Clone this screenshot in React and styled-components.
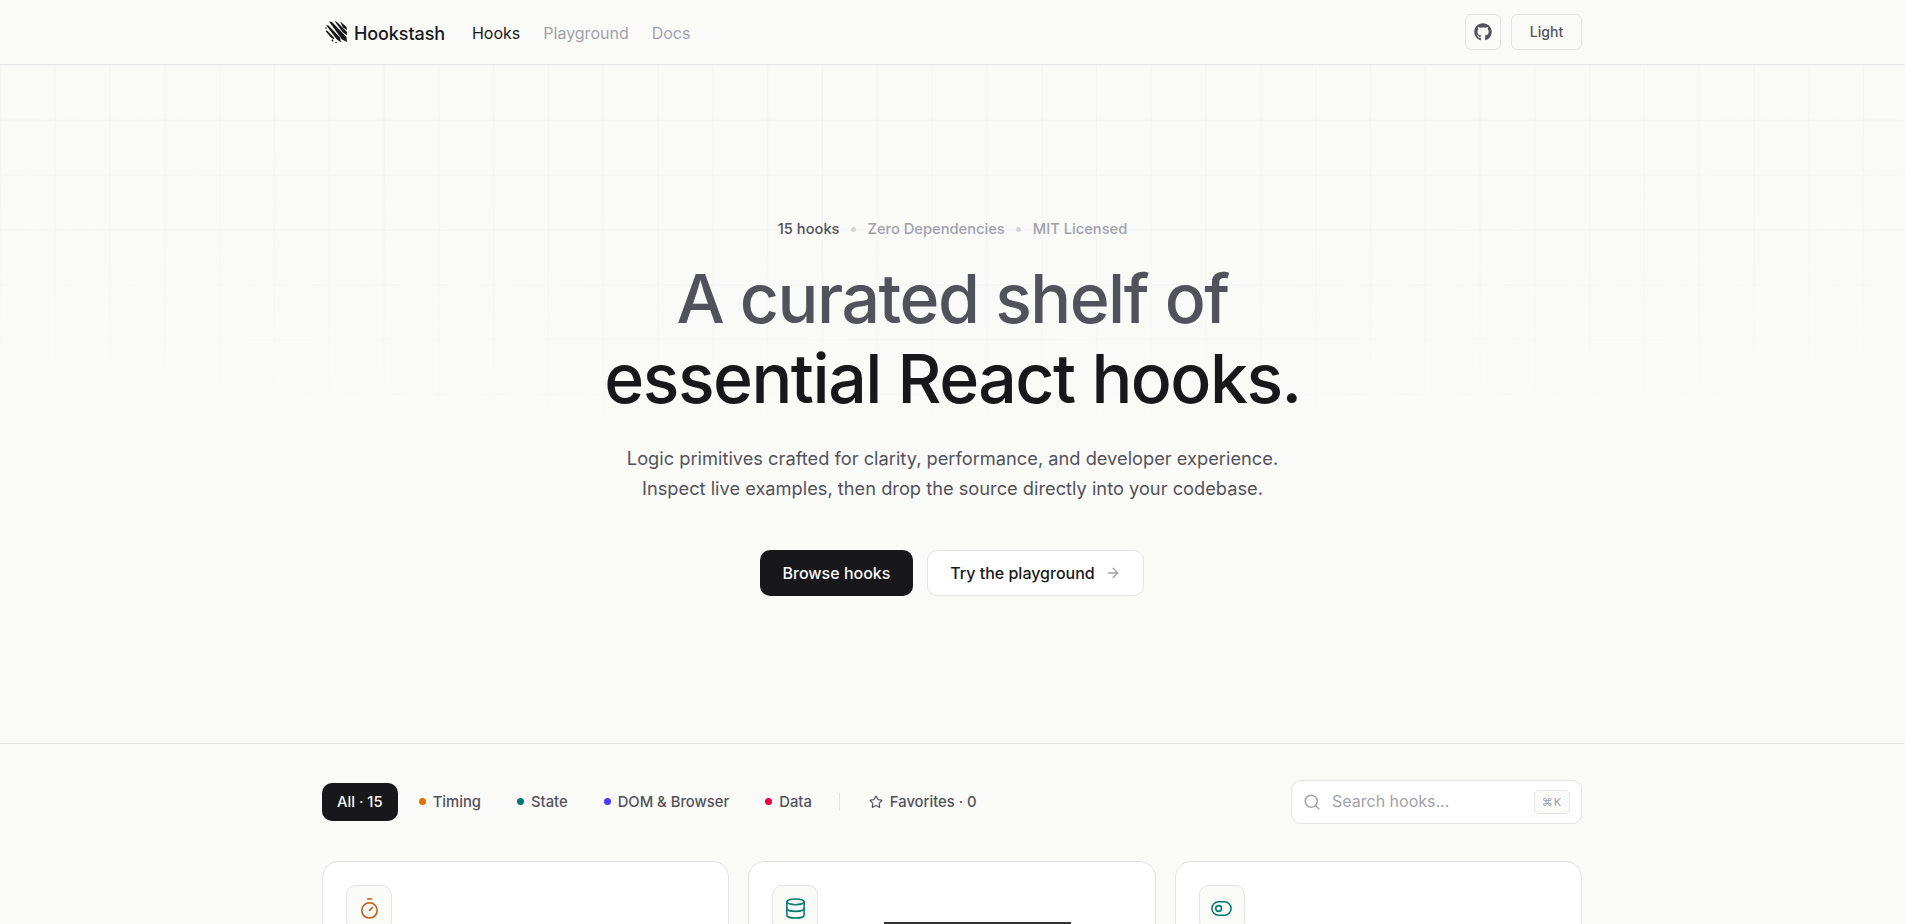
import React from "react";
import styled, { createGlobalStyle } from "styled-components";
import { ArrowRight, Search, Star, Timer, Database, ToggleLeft } from "lucide-react";
import { FaGithub } from "react-icons/fa";

const Global = createGlobalStyle`
  html, body { margin: 0; padding: 0; background: #fafaf9; }
  body { font-family: Inter, "Liberation Sans", sans-serif; color: #18181b; overflow: hidden; height: 924px; }
  * { box-sizing: border-box; }
`;

const Nav = styled.header`
  height: 65px;
  border-bottom: 1px solid #e4e4e7;
  display: flex;
`;
const Container = styled.div`
  width: 1260px;
  margin-left: 322px;
  display: flex;
  align-items: center;
`;
const Brand = styled.div`
  display: flex;
  align-items: center;
  gap: 7px;
  font-size: 18px;
  font-weight: 500;
  letter-spacing: -0.1px;
`;
const BrandName = styled.span`
  padding-top: 2px;
`;
const NavLinks = styled.nav`
  display: flex;
  gap: 23px;
  margin-left: 27px;
  padding-top: 2px;
`;
const NavLink = styled.a`
  font-size: 16px;
  color: ${(p) => (p.$active ? "#18181b" : "#a1a1aa")};
`;
const NavRight = styled.div`
  margin-left: auto;
  display: flex;
  gap: 10px;
`;
const IconBtn = styled.button`
  width: 36px;
  height: 36px;
  border: 1px solid #e4e4e7;
  border-radius: 6px;
  background: transparent;
  display: flex;
  align-items: center;
  justify-content: center;
  color: #52525b;
  padding: 0;
`;
const ThemeBtn = styled.button`
  width: 71px;
  height: 36px;
  border: 1px solid #e4e4e7;
  border-radius: 6px;
  background: transparent;
  padding: 0 0 2px;
  font: 500 14px Inter, sans-serif;
  color: #52525b;
`;
const Hero = styled.section`
  position: relative;
  height: 679px;
  border-bottom: 1px solid #e4e4e7;
  display: flex;
  flex-direction: column;
  align-items: center;
  padding-top: 153px;
`;
const Grid = styled.div`
  position: absolute;
  inset: 0;
  background-image:
    linear-gradient(to right, #f4f4f5 1px, transparent 1px),
    linear-gradient(to bottom, #f4f4f5 1px, transparent 1px);
  background-size: 54.8px 54.8px;
  -webkit-mask-image: radial-gradient(ellipse 1700px 380px at 50% 0, #000 45%, transparent 100%);
  mask-image: radial-gradient(ellipse 1700px 380px at 50% 0, #000 45%, transparent 100%);
`;
const Meta = styled.div`
  position: relative;
  display: flex;
  align-items: center;
  gap: 11.5px;
  font-size: 14.7px;
  font-weight: 500;
  line-height: 22px;
  color: #a1a1aa;
`;
const MetaStrong = styled.span`
  color: #52525b;
`;
const MetaDot = styled.span`
  width: 5px;
  height: 5px;
  border-radius: 50%;
  background: #d4d4d8;
`;
const Title = styled.h1`
  position: relative;
  margin: 18px 0 0;
  font-size: 68px;
  line-height: 80px;
  font-weight: 500;
  letter-spacing: -1.5px;
  text-align: center;
  color: #18181b;
`;
const TitleMuted = styled.span`
  color: #52525b;
  display: block;
`;
const Sub = styled.p`
  position: relative;
  margin: 25px 0 0;
  font-size: 18.25px;
  line-height: 30px;
  text-align: center;
  color: #52525b;
`;
const Actions = styled.div`
  position: relative;
  display: flex;
  gap: 14px;
  margin: 47px 1px 0 0;
`;
const Primary = styled.button`
  width: 153px;
  height: 46px;
  border: none;
  border-radius: 10px;
  background: #18181b;
  color: #fafafa;
  font: 500 16px Inter, sans-serif;
`;
const Secondary = styled.button`
  width: 217px;
  height: 46px;
  border: 1px solid #e4e4e7;
  border-radius: 10px;
  background: #fff;
  color: #18181b;
  font: 500 16px Inter, sans-serif;
  display: flex;
  align-items: center;
  justify-content: center;
  gap: 10px;
`;
const Arrow = styled(ArrowRight)`
  color: #a1a1aa;
`;
const Section = styled.main`
  width: 1260px;
  margin-left: 322px;
`;
const Toolbar = styled.div`
  display: flex;
  align-items: center;
  gap: 6px;
  height: 44px;
  margin-top: 36px;
`;
const Chip = styled.button`
  height: 38px;
  padding: 0 15px 1px;
  display: flex;
  align-items: center;
  gap: 7px;
  border: none;
  border-radius: 10px;
  background: ${(p) => (p.$active ? "#18181b" : "transparent")};
  color: ${(p) => (p.$active ? "#fafafa" : "#52525b")};
  font: 500 14.8px Inter, sans-serif;
`;
const Dot = styled.span`
  width: 7px;
  height: 7px;
  border-radius: 50%;
  background: ${(p) => p.$color};
`;
const Divider = styled.span`
  width: 1px;
  height: 18px;
  margin: 0 8px 0 6px;
  background: #e4e4e7;
`;
const SearchBox = styled.div`
  margin-left: auto;
  width: 291px;
  height: 44px;
  border: 1px solid #e4e4e7;
  border-radius: 10px;
  background: #fff;
  display: flex;
  align-items: center;
  padding: 0 11px;
  gap: 11px;
  color: #a1a1aa;
  font-size: 16px;
`;
const SearchLabel = styled.span`
  padding-bottom: 2px;
`;
const Kbd = styled.span`
  margin-left: auto;
  width: 36px;
  height: 24px;
  border: 1px solid #e4e4e7;
  border-radius: 5px;
  background: #fafaf9;
  display: flex;
  align-items: center;
  justify-content: center;
  font-size: 11px;
  letter-spacing: 1px;
  color: #a1a1aa;
`;
const Cards = styled.div`
  display: grid;
  grid-template-columns: repeat(3, 1fr);
  gap: 19px;
  margin-top: 37px;
`;
const Card = styled.article`
  position: relative;
  height: 300px;
  border: 1px solid #e4e4e7;
  border-radius: 16px;
  background: #fff;
  padding: 23px;
`;
const CardIcon = styled.div`
  width: 46px;
  height: 46px;
  border: 1px solid #e4e4e7;
  border-radius: 10px;
  background: #fafaf9;
  display: flex;
  align-items: center;
  justify-content: center;
  color: ${(p) => p.$color};
`;
const TooltipBar = styled.div`
  position: absolute;
  left: 135px;
  top: 60px;
  width: 187px;
  height: 40px;
  background: #333336;
`;

const Logo = () => (
  <svg width="25" height="24" viewBox="-3 0 25 24" fill="#18181b">
    <polygon points="4,1.5 7,2 21.5,17 22,22 17,19.5" />
    <polygon points="9.5,1 12,2 22,12 22.5,16 17.5,12" />
    <polygon points="15,1.5 17,3 21.5,7 22,10 18,7.5" />
    <polygon points="1,5 3.5,5.5 15,17.5 16,22.5 11.5,19" />
    <polygon points="0.5,11 2,10.5 9,17.5 9,19.5 5.5,17" />
    <circle cx="1" cy="8" r="0.8" />
    <circle cx="7.5" cy="20.5" r="0.9" />
    <circle cx="11" cy="22.5" r="0.7" />
  </svg>
);

export default function App() {
  return (
    <>
      <Global />
      <Nav>
        <Container>
          <Brand>
            <Logo />
            <BrandName>Hookstash</BrandName>
          </Brand>
          <NavLinks>
            <NavLink $active>Hooks</NavLink>
            <NavLink>Playground</NavLink>
            <NavLink>Docs</NavLink>
          </NavLinks>
          <NavRight>
            <IconBtn aria-label="GitHub">
              <FaGithub size={18} />
            </IconBtn>
            <ThemeBtn>Light</ThemeBtn>
          </NavRight>
        </Container>
      </Nav>
      <Hero>
        <Grid />
        <Meta>
          <MetaStrong>15 hooks</MetaStrong>
          <MetaDot />
          <span>Zero Dependencies</span>
          <MetaDot />
          <span>MIT Licensed</span>
        </Meta>
        <Title>
          <TitleMuted>A curated shelf of</TitleMuted>
          essential React hooks.
        </Title>
        <Sub>
          Logic primitives crafted for clarity, performance, and developer experience.
          <br />
          Inspect live examples, then drop the source directly into your codebase.
        </Sub>
        <Actions>
          <Primary>Browse hooks</Primary>
          <Secondary>
            Try the playground
            <Arrow size={16} />
          </Secondary>
        </Actions>
      </Hero>
      <Section>
        <Toolbar>
          <Chip $active>All · 15</Chip>
          <Chip><Dot $color="#e17100" />Timing</Chip>
          <Chip><Dot $color="#00786f" />State</Chip>
          <Chip><Dot $color="#4f39f6" />DOM &amp; Browser</Chip>
          <Chip><Dot $color="#ec003f" />Data</Chip>
          <Divider />
          <Chip><Star size={14} />Favorites · 0</Chip>
          <SearchBox>
            <Search size={18} />
            <SearchLabel>Search hooks...</SearchLabel>
            <Kbd>⌘K</Kbd>
          </SearchBox>
        </Toolbar>
        <Cards>
          <Card><CardIcon $color="#c2570c"><Timer size={23} strokeWidth={1.6} /></CardIcon></Card>
          <Card>
            <CardIcon $color="#00786f"><Database size={23} strokeWidth={1.6} /></CardIcon>
            <TooltipBar />
          </Card>
          <Card><CardIcon $color="#00786f"><ToggleLeft size={23} strokeWidth={1.6} /></CardIcon></Card>
        </Cards>
      </Section>
    </>
  );
}
